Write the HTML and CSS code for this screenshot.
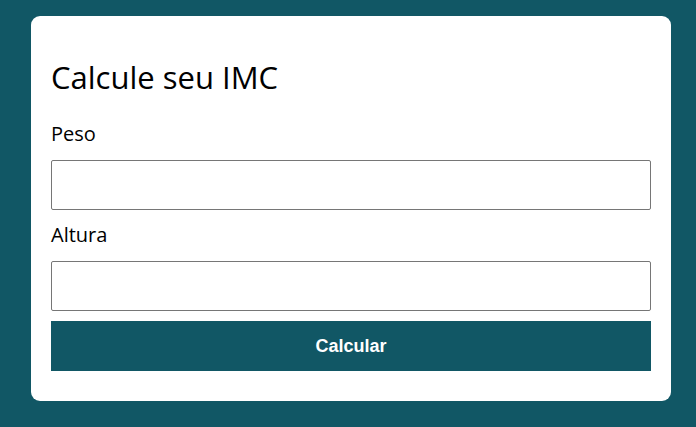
FILE: index.html
```html
<!DOCTYPE html>
<html lang="pt-BR">
<head>
<meta charset="utf-8">
<title>Calcule seu IMC</title>
<link rel="stylesheet" href="styles.css">
</head>
<body>
  <main class="card">
    <h1 class="title">Calcule seu IMC</h1>
    <form class="form">
      <label class="label" for="peso">Peso</label>
      <input class="field" id="peso" type="text">
      <label class="label" for="altura">Altura</label>
      <input class="field" id="altura" type="text">
      <button class="btn" type="button">Calcular</button>
    </form>
  </main>
</body>
</html>
```

FILE: styles.css
```css
* { box-sizing: border-box; }
html, body { margin: 0; padding: 0; }
body {
  background: #115765;
  font-family: "Open Sans", "Noto Sans", sans-serif;
  padding: 16px 25px 0 31px;
  min-height: 427px;
}
.card {
  width: 640px;
  background: #fff;
  border-radius: 9px;
  padding: 0 20px 30px;
}
.title {
  margin: 0;
  padding-top: 40px;
  font-size: 31px;
  font-weight: 500;
  line-height: 43px;
  color: #000;
}
.form {
  display: flex;
  flex-direction: column;
}
.label {
  font-size: 20px;
  line-height: 27px;
  color: #000;
  margin-top: 21px;
  margin-bottom: 13px;
}
.label + .field + .label { margin-top: 11px; }
.field {
  height: 50px;
  width: 600px;
  border: 1px solid #767676;
  border-radius: 2px;
  margin: 0;
  padding: 0 8px;
  font: inherit;
}
.btn {
  margin-top: 10px;
  height: 50px;
  width: 600px;
  border: none;
  background: #115765;
  color: #fff;
  font-family: "Liberation Sans", Arial, sans-serif;
  font-weight: 700;
  font-size: 18px;
}
```
